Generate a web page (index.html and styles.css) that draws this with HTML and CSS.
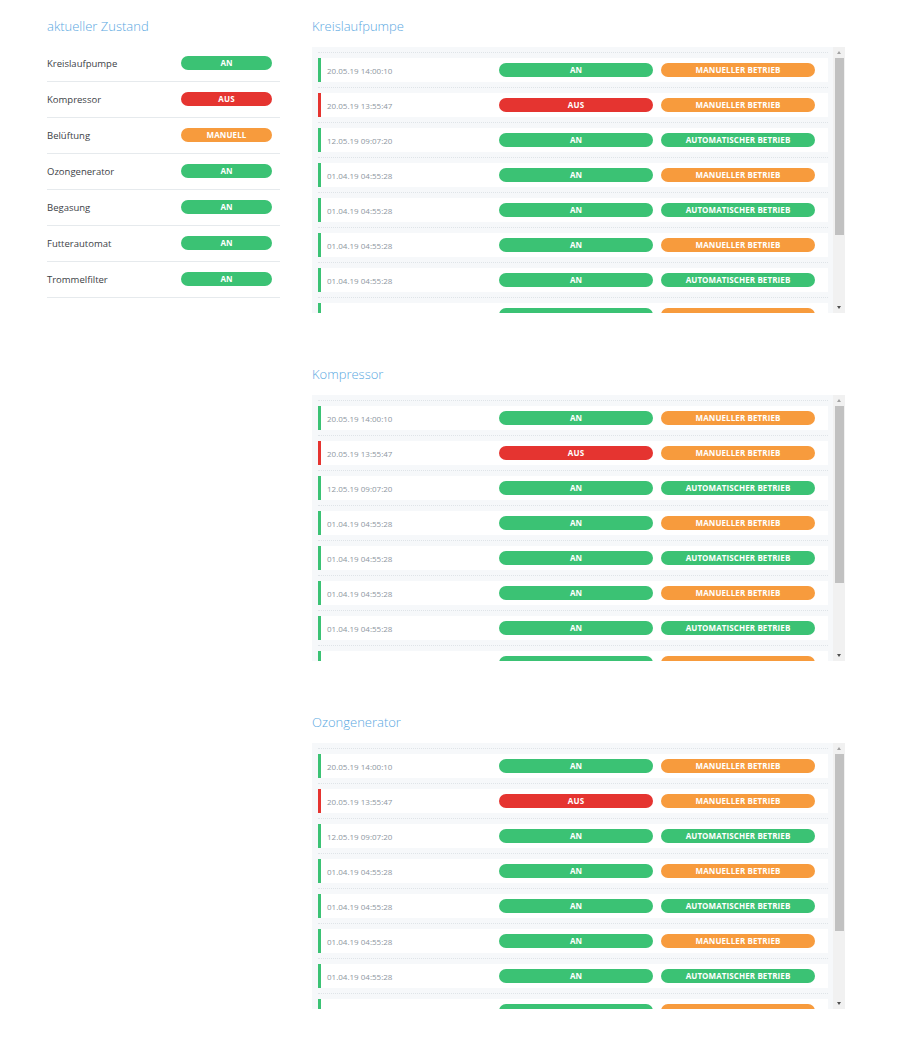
FILE: index.html
```html
<!DOCTYPE html>
<html lang="de">
<head>
<meta charset="utf-8">
<title>Zustand</title>
<link rel="stylesheet" href="styles.css">
</head>
<body>
<div class="page">
  <aside class="status">
    <h2 class="title status-title">aktueller Zustand</h2>
    <ul class="status-list">
      <li class="status-row"><span class="status-name">Kreislaufpumpe</span><span class="pill pill-green status-pill">AN</span></li>
      <li class="status-row"><span class="status-name">Kompressor</span><span class="pill pill-red status-pill">AUS</span></li>
      <li class="status-row"><span class="status-name">Belüftung</span><span class="pill pill-orange status-pill">MANUELL</span></li>
      <li class="status-row"><span class="status-name">Ozongenerator</span><span class="pill pill-green status-pill">AN</span></li>
      <li class="status-row"><span class="status-name">Begasung</span><span class="pill pill-green status-pill">AN</span></li>
      <li class="status-row"><span class="status-name">Futterautomat</span><span class="pill pill-green status-pill">AN</span></li>
      <li class="status-row"><span class="status-name">Trommelfilter</span><span class="pill pill-green status-pill">AN</span></li>
    </ul>
  </aside>

  <main class="logs">
    <section class="log">
      <h2 class="title">Kreislaufpumpe</h2>
      <div class="log-panel">
        <div class="log-list">
          <div class="entry"><div class="entry-row mark-green"><span class="time">20.05.19 14:00:10</span><span class="pill pill-green">AN</span><span class="pill pill-orange">MANUELLER BETRIEB</span></div></div>
          <div class="entry"><div class="entry-row mark-red"><span class="time">20.05.19 13:55:47</span><span class="pill pill-red">AUS</span><span class="pill pill-orange">MANUELLER BETRIEB</span></div></div>
          <div class="entry"><div class="entry-row mark-green"><span class="time">12.05.19 09:07:20</span><span class="pill pill-green">AN</span><span class="pill pill-green">AUTOMATISCHER BETRIEB</span></div></div>
          <div class="entry"><div class="entry-row mark-green"><span class="time">01.04.19 04:55:28</span><span class="pill pill-green">AN</span><span class="pill pill-orange">MANUELLER BETRIEB</span></div></div>
          <div class="entry"><div class="entry-row mark-green"><span class="time">01.04.19 04:55:28</span><span class="pill pill-green">AN</span><span class="pill pill-green">AUTOMATISCHER BETRIEB</span></div></div>
          <div class="entry"><div class="entry-row mark-green"><span class="time">01.04.19 04:55:28</span><span class="pill pill-green">AN</span><span class="pill pill-orange">MANUELLER BETRIEB</span></div></div>
          <div class="entry"><div class="entry-row mark-green"><span class="time">01.04.19 04:55:28</span><span class="pill pill-green">AN</span><span class="pill pill-green">AUTOMATISCHER BETRIEB</span></div></div>
          <div class="entry"><div class="entry-row mark-green"><span class="time"></span><span class="pill pill-green"></span><span class="pill pill-orange"></span></div></div>
        </div>
        <div class="scrollbar"><span class="sb-btn sb-up"></span><span class="sb-thumb"></span><span class="sb-track"></span><span class="sb-btn sb-down"></span></div>
      </div>
    </section>

    <section class="log">
      <h2 class="title">Kompressor</h2>
      <div class="log-panel">
        <div class="log-list">
          <div class="entry"><div class="entry-row mark-green"><span class="time">20.05.19 14:00:10</span><span class="pill pill-green">AN</span><span class="pill pill-orange">MANUELLER BETRIEB</span></div></div>
          <div class="entry"><div class="entry-row mark-red"><span class="time">20.05.19 13:55:47</span><span class="pill pill-red">AUS</span><span class="pill pill-orange">MANUELLER BETRIEB</span></div></div>
          <div class="entry"><div class="entry-row mark-green"><span class="time">12.05.19 09:07:20</span><span class="pill pill-green">AN</span><span class="pill pill-green">AUTOMATISCHER BETRIEB</span></div></div>
          <div class="entry"><div class="entry-row mark-green"><span class="time">01.04.19 04:55:28</span><span class="pill pill-green">AN</span><span class="pill pill-orange">MANUELLER BETRIEB</span></div></div>
          <div class="entry"><div class="entry-row mark-green"><span class="time">01.04.19 04:55:28</span><span class="pill pill-green">AN</span><span class="pill pill-green">AUTOMATISCHER BETRIEB</span></div></div>
          <div class="entry"><div class="entry-row mark-green"><span class="time">01.04.19 04:55:28</span><span class="pill pill-green">AN</span><span class="pill pill-orange">MANUELLER BETRIEB</span></div></div>
          <div class="entry"><div class="entry-row mark-green"><span class="time">01.04.19 04:55:28</span><span class="pill pill-green">AN</span><span class="pill pill-green">AUTOMATISCHER BETRIEB</span></div></div>
          <div class="entry"><div class="entry-row mark-green"><span class="time"></span><span class="pill pill-green"></span><span class="pill pill-orange"></span></div></div>
        </div>
        <div class="scrollbar"><span class="sb-btn sb-up"></span><span class="sb-thumb"></span><span class="sb-track"></span><span class="sb-btn sb-down"></span></div>
      </div>
    </section>

    <section class="log">
      <h2 class="title">Ozongenerator</h2>
      <div class="log-panel">
        <div class="log-list">
          <div class="entry"><div class="entry-row mark-green"><span class="time">20.05.19 14:00:10</span><span class="pill pill-green">AN</span><span class="pill pill-orange">MANUELLER BETRIEB</span></div></div>
          <div class="entry"><div class="entry-row mark-red"><span class="time">20.05.19 13:55:47</span><span class="pill pill-red">AUS</span><span class="pill pill-orange">MANUELLER BETRIEB</span></div></div>
          <div class="entry"><div class="entry-row mark-green"><span class="time">12.05.19 09:07:20</span><span class="pill pill-green">AN</span><span class="pill pill-green">AUTOMATISCHER BETRIEB</span></div></div>
          <div class="entry"><div class="entry-row mark-green"><span class="time">01.04.19 04:55:28</span><span class="pill pill-green">AN</span><span class="pill pill-orange">MANUELLER BETRIEB</span></div></div>
          <div class="entry"><div class="entry-row mark-green"><span class="time">01.04.19 04:55:28</span><span class="pill pill-green">AN</span><span class="pill pill-green">AUTOMATISCHER BETRIEB</span></div></div>
          <div class="entry"><div class="entry-row mark-green"><span class="time">01.04.19 04:55:28</span><span class="pill pill-green">AN</span><span class="pill pill-orange">MANUELLER BETRIEB</span></div></div>
          <div class="entry"><div class="entry-row mark-green"><span class="time">01.04.19 04:55:28</span><span class="pill pill-green">AN</span><span class="pill pill-green">AUTOMATISCHER BETRIEB</span></div></div>
          <div class="entry"><div class="entry-row mark-green"><span class="time"></span><span class="pill pill-green"></span><span class="pill pill-orange"></span></div></div>
        </div>
        <div class="scrollbar"><span class="sb-btn sb-up"></span><span class="sb-thumb"></span><span class="sb-track"></span><span class="sb-btn sb-down"></span></div>
      </div>
    </section>
  </main>
</div>
</body>
</html>
```

FILE: styles.css
```css
* { box-sizing: border-box; }

html, body {
  margin: 0;
  padding: 0;
  background: #ffffff;
}

body {
  font-family: "Open Sans", "Liberation Sans", sans-serif;
  color: #3a3f44;
}

.page {
  display: flex;
  align-items: flex-start;
  gap: 32px;
  padding: 17px 0 0 47px;
}

.title {
  margin: 0;
  font-size: 13px;
  line-height: 18px;
  font-weight: 300;
  color: #5aa8df;
}

/* ---------- left: current state ---------- */
.status {
  width: 233px;
  flex: none;
}

.status-title {
  margin-bottom: 11px;
}

.status-list {
  list-style: none;
  margin: 0;
  padding: 0;
}

.status-row {
  display: flex;
  align-items: center;
  height: 36px;
  padding-bottom: 1px;
  border-bottom: 1px solid #e6eaed;
}

.status-name {
  width: 134px;
  flex: none;
  font-size: 9.5px;
  color: #3c4146;
}

.status-pill {
  width: 91px;
}

/* ---------- pills ---------- */
.pill {
  display: flex;
  align-items: center;
  justify-content: center;
  height: 14px;
  border-radius: 7px;
  font-size: 8px;
  font-weight: 700;
  line-height: 14px;
  color: #ffffff;
  letter-spacing: 0.1px;
  white-space: nowrap;
}

.pill-green { background: #3bc274; }
.pill-red { background: #e53430; }
.pill-orange { background: #f79b3d; }

/* ---------- right: logs ---------- */
.logs {
  width: 533px;
  flex: none;
}

.log + .log {
  margin-top: 52px;
}

.log .title {
  margin-bottom: 12px;
}

.log-panel {
  display: flex;
  height: 266px;
  background: #f6f8fa;
  overflow: hidden;
}

.log-list {
  flex: 1;
  padding: 0 5px 0 6px;
  overflow: hidden;
}

.entry {
  margin-top: 5px;
  padding-top: 5px;
  border-top: 1px dotted #dfe4e8;
}

.entry-row {
  display: flex;
  align-items: center;
  height: 24px;
  background: #ffffff;
  border-left: 3px solid #3bc274;
  padding: 0 13px 0 6px;
  gap: 8px;
}

.entry-row.mark-red { border-left-color: #e53430; }

.time {
  flex: 1;
  margin-right: -8px;
  font-size: 8px;
  color: #8e979f;
  white-space: nowrap;
}

.entry-row .pill {
  width: 154px;
  flex: none;
}

/* ---------- scrollbar ---------- */
.scrollbar {
  width: 12px;
  flex: none;
  display: flex;
  flex-direction: column;
  background: #f1f1f1;
}

.sb-btn {
  height: 11px;
  flex: none;
  display: flex;
  align-items: center;
  justify-content: center;
}

.sb-btn::before {
  content: "";
  width: 0;
  height: 0;
  border-left: 2.5px solid transparent;
  border-right: 2.5px solid transparent;
}

.sb-up::before { border-bottom: 3px solid #a3a3a3; }
.sb-down::before { border-top: 3px solid #505050; }

.sb-thumb {
  height: 177px;
  width: 9px;
  margin-left: 1.5px;
  background: #c1c1c1;
  flex: none;
}

.sb-track {
  flex: 1;
}
```
